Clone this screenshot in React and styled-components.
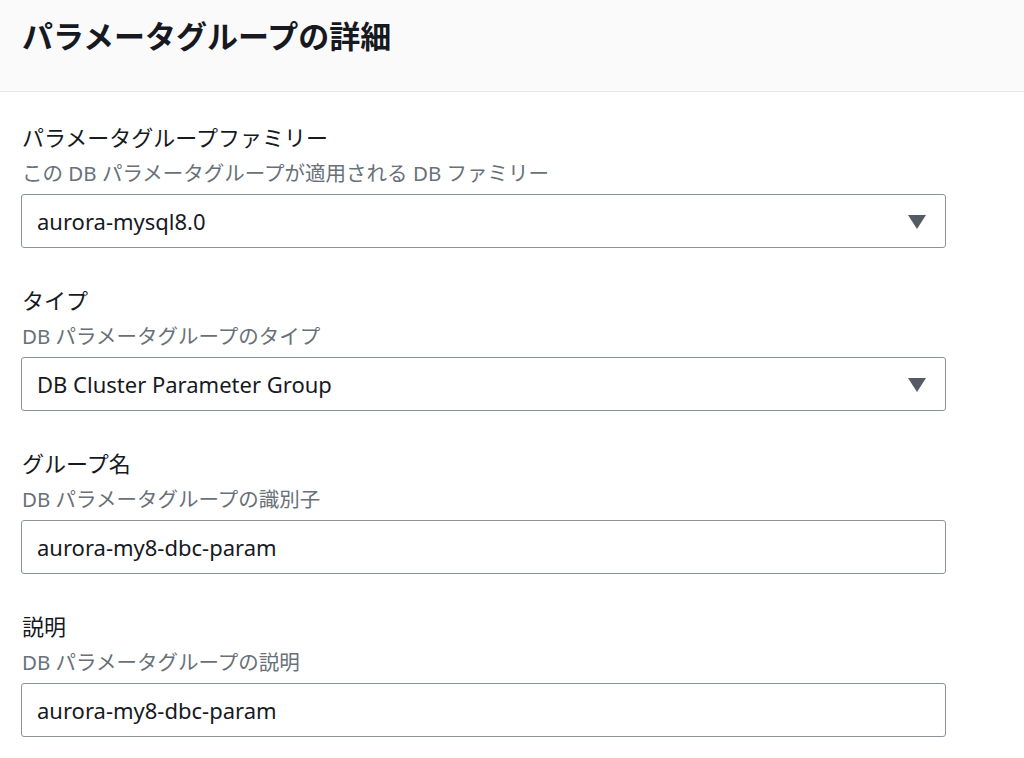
import styled, { createGlobalStyle } from "styled-components";

const GlobalStyle = createGlobalStyle`
  html, body {
    margin: 0;
    padding: 0;
    background: #fff;
  }
  body {
    font-family: "Noto Sans", "Noto Sans CJK JP", sans-serif;
    color: #16191f;
  }
`;

const Page = styled.div`
  width: 1024px;
  height: 758px;
  overflow: hidden;
  background: #fff;
`;

const Header = styled.div`
  height: 92px;
  box-sizing: border-box;
  padding: 16px 22px 0;
  background: #fafafa;
  border-bottom: 1px solid #e6e8e8;
`;

const Title = styled.h2`
  margin: 0;
  font-size: 31px;
  line-height: 40px;
  font-weight: 700;
  color: #16191f;
`;

const Body = styled.div`
  display: flex;
  flex-direction: column;
  gap: 37px;
  padding: 30px 0 0 21px;
  width: 925px;
`;

const Field = styled.div`
  display: flex;
  flex-direction: column;
`;

const Label = styled.div`
  font-size: 22px;
  line-height: 30px;
  color: #16191f;
  padding-left: 1px;
`;

const Desc = styled.div`
  font-size: 20.5px;
  line-height: 28px;
  color: #687078;
  margin: 7px 0 7px;
  padding-left: 1px;
`;

const Box = styled.div`
  height: 54px;
  box-sizing: border-box;
  border: 1px solid #8d9399;
  border-radius: 3px;
  display: flex;
  align-items: center;
  justify-content: space-between;
  padding: 0 19px 0 15px;
  font-size: 22px;
  color: #16191f;
  cursor: ${(p) => (p.$select ? "pointer" : "text")};
`;

const Caret = styled.span`
  width: 0;
  height: 0;
  border-left: 9px solid transparent;
  border-right: 9px solid transparent;
  border-top: 14px solid #545b64;
  margin-top: 1px;
`;

const fields = [
  {
    label: "パラメータグループファミリー",
    desc: "この DB パラメータグループが適用される DB ファミリー",
    value: "aurora-mysql8.0",
    select: true,
  },
  {
    label: "タイプ",
    desc: "DB パラメータグループのタイプ",
    value: "DB Cluster Parameter Group",
    select: true,
  },
  {
    label: "グループ名",
    desc: "DB パラメータグループの識別子",
    value: "aurora-my8-dbc-param",
  },
  {
    label: "説明",
    desc: "DB パラメータグループの説明",
    value: "aurora-my8-dbc-param",
  },
];

export default function App() {
  return (
    <Page>
      <GlobalStyle />
      <Header>
        <Title>パラメータグループの詳細</Title>
      </Header>
      <Body>
        {fields.map((f) => (
          <Field key={f.label}>
            <Label>{f.label}</Label>
            <Desc>{f.desc}</Desc>
            <Box $select={f.select}>
              <span>{f.value}</span>
              {f.select && <Caret />}
            </Box>
          </Field>
        ))}
      </Body>
    </Page>
  );
}
